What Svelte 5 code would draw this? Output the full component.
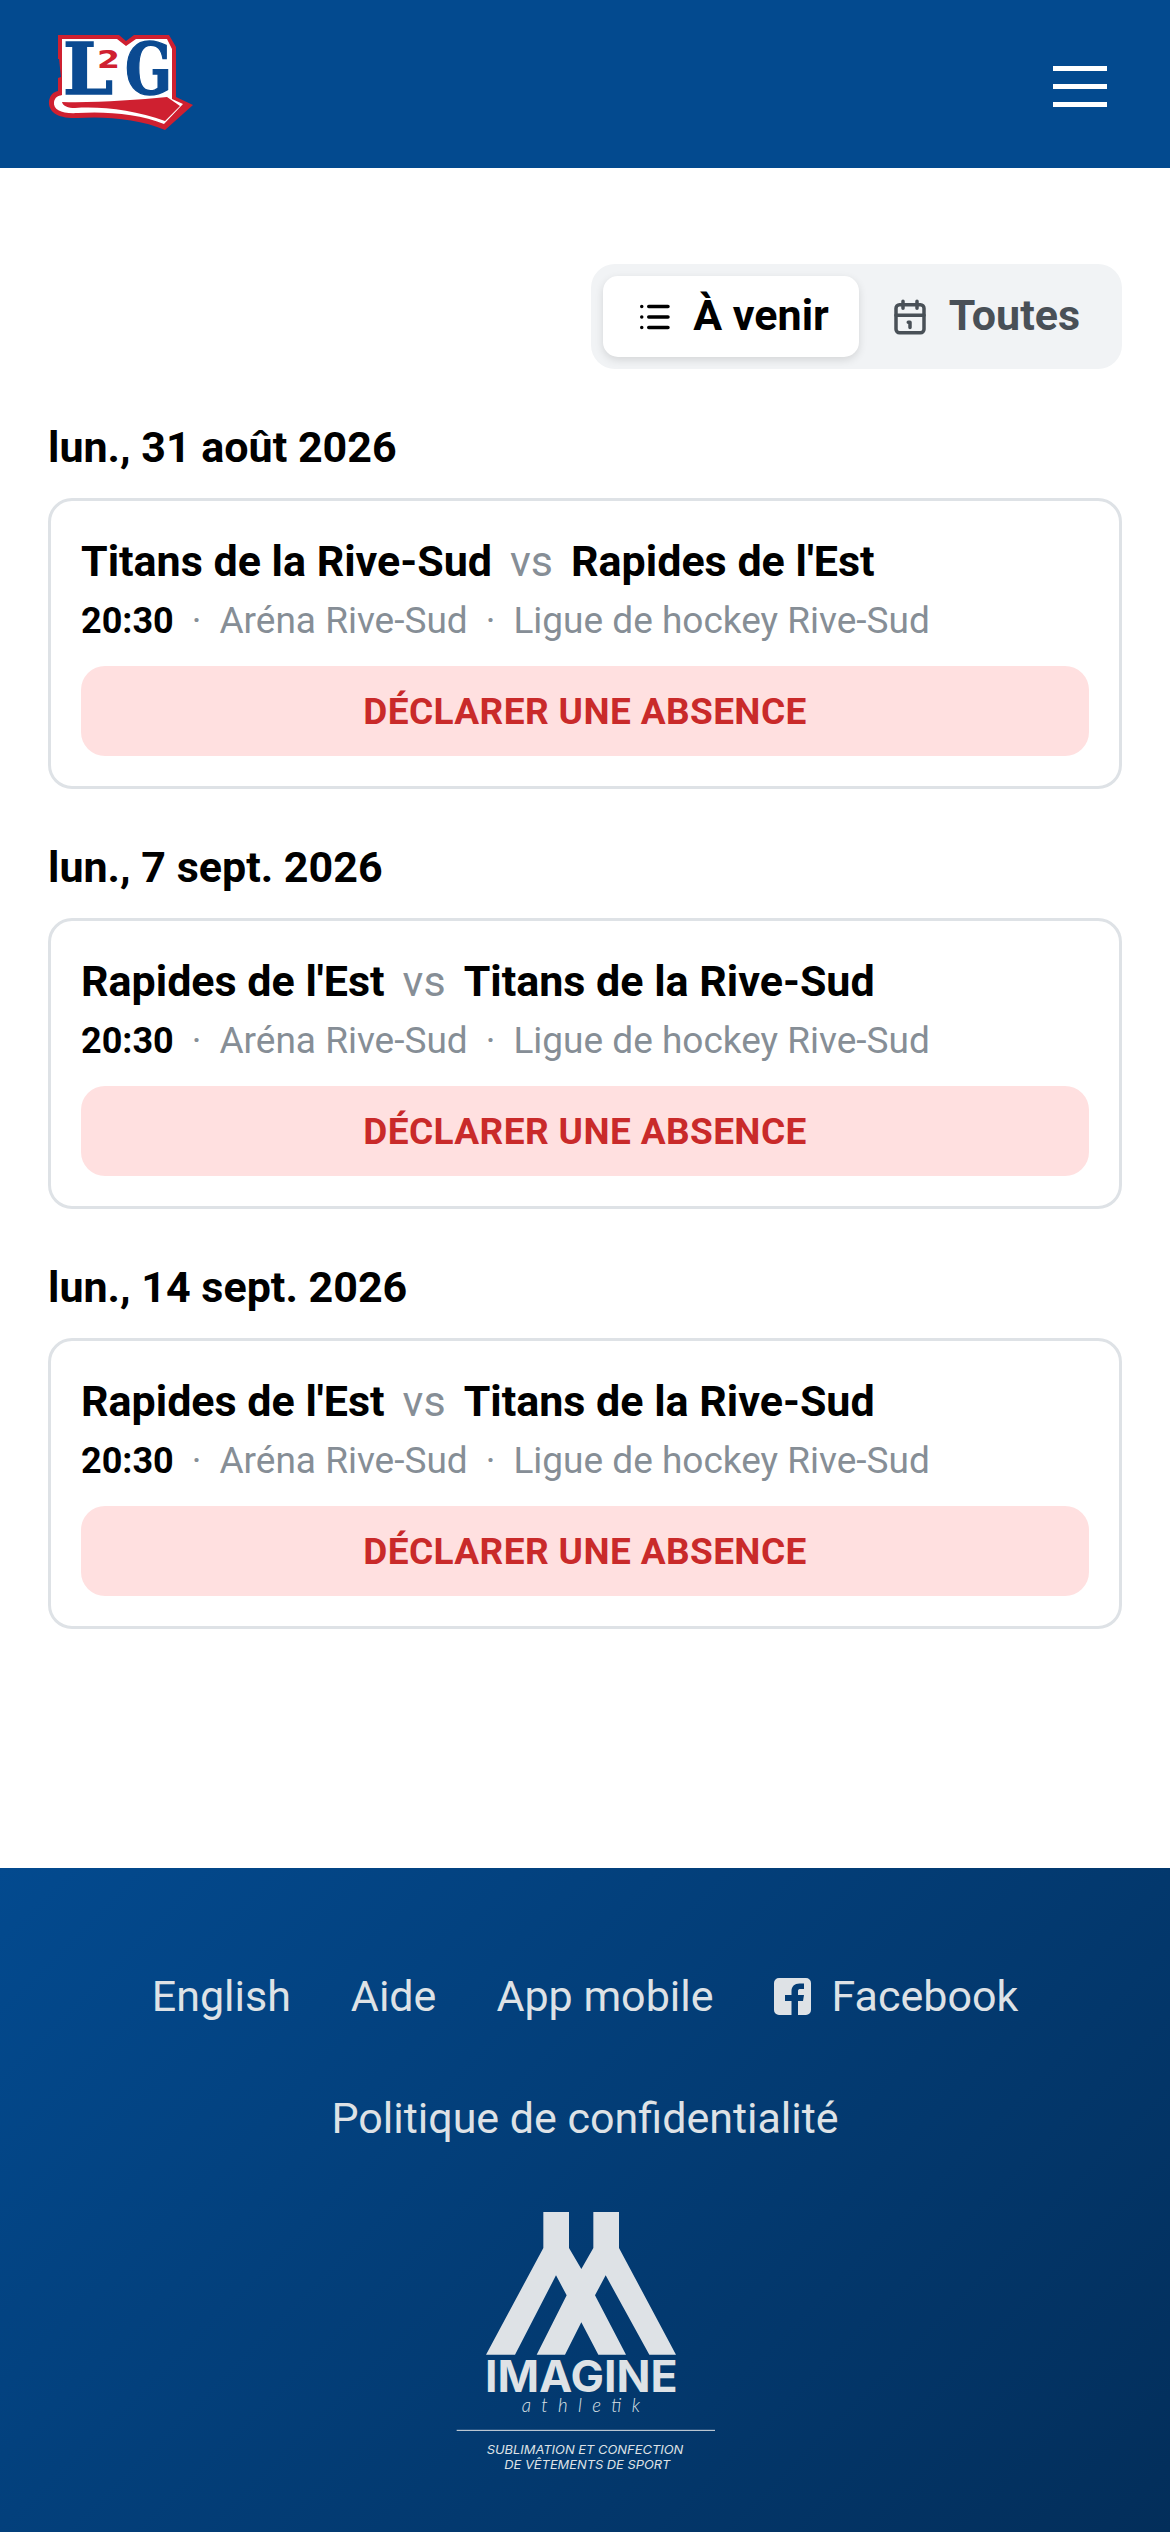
<script>
  const games = [
    { date: 'lun., 31 août 2026', home: 'Titans de la Rive-Sud', away: "Rapides de l'Est" },
    { date: 'lun., 7 sept. 2026', home: "Rapides de l'Est", away: 'Titans de la Rive-Sud' },
    { date: 'lun., 14 sept. 2026', home: "Rapides de l'Est", away: 'Titans de la Rive-Sud' }
  ];
</script>

<div class="page">
  <header class="top">
    <svg class="logo" viewBox="48 34 146 98" width="146" height="98" aria-label="L2G">
      <path d="M58,35 H119 L126,41 L134,35 H169 L176,47 V97 L193,105 L165,130 C140,119 105,116 78,118 C58,119 48,112 49,101 C50,95 53,92 58,91 V78 L61,77 L59,59 H58 Z" fill="#cf2030"/>
      <path d="M62,39 H117 L126,46 L136,39 H167 L172,49 V99 L183,104 L164,124 C140,114 105,111 78,113 C62,114 53,110 54,102 C55,97 58,96 62,95 Z" fill="#fff"/>
      <text x="63" y="94" class="slab" textLength="50" lengthAdjust="spacingAndGlyphs">L</text>
      <text x="125" y="94" class="slab" textLength="47" lengthAdjust="spacingAndGlyphs">G</text>
      <rect x="96" y="49" width="25" height="22" fill="#fff"/>
      <text x="97" y="68" class="two" textLength="23" lengthAdjust="spacingAndGlyphs">2</text>
      <path d="M62,102 C95,103 135,100 167,97 L180,106 L165,121 C135,110 100,106 75,108 C68,108 63,106 62,102 Z" fill="#cf2030"/>
    </svg>
    <button class="burger" aria-label="Menu"><span></span><span></span><span></span></button>
  </header>

  <main class="content">
    <div class="toggle-row">
      <div class="toggle">
        <div class="tab active">
          <svg viewBox="0 0 24 24" width="42" height="42" fill="none" stroke="currentColor" stroke-width="2" stroke-linecap="round" stroke-linejoin="round">
            <path d="M9 6h11M9 12h11M9 18h11M5 6v.01M5 12v.01M5 18v.01"/>
          </svg>
          <span>À venir</span>
        </div>
        <div class="tab">
          <svg viewBox="0 0 24 24" width="42" height="42" fill="none" stroke="currentColor" stroke-width="2" stroke-linecap="round" stroke-linejoin="round">
            <rect x="4" y="5" width="16" height="16" rx="2"/>
            <path d="M16 3v4M8 3v4M4 11h16M11 15h1v3"/>
          </svg>
          <span>Toutes</span>
        </div>
      </div>
    </div>

    {#each games as g}
      <section class="group">
        <h2>{g.date}</h2>
        <article class="card">
          <div class="teams"><b>{g.home}</b><span class="vs">vs</span><b>{g.away}</b></div>
          <div class="meta">
            <b>20:30</b><span class="dot">·</span><span>Aréna Rive-Sud</span><span class="dot">·</span><span>Ligue de hockey Rive-Sud</span>
          </div>
          <button class="absence">DÉCLARER UNE ABSENCE</button>
        </article>
      </section>
    {/each}
  </main>

  <footer class="foot">
    <nav class="links">
      <span>English</span>
      <span>Aide</span>
      <span>App mobile</span>
      <span class="fb">
        <svg viewBox="0 0 37 37" width="37" height="37">
          <path d="M5 0H32A5 5 0 0 1 37 5V32A5 5 0 0 1 32 37H24V23H29L30 17H24V13C24 11.500 25 11 26.500 11H30V5.500H25.500C20.500 5.500 17.500 8.500 17.500 13V17H11V23H17.500V37H5A5 5 0 0 1 0 32V5A5 5 0 0 1 5 0Z" fill="#dee2e6"/>
        </svg>
        Facebook
      </span>
      <span class="wide">Politique de confidentialité</span>
    </nav>
    <svg class="imagine" viewBox="15 0 960 900" width="320" height="300" aria-label="Imagine athletik">
      <path fill="#dee2e6" d="M370 72H447V180L484 243L520 180V72H597V180L768 500H688L557 262L525 322L618 500H535L484 403L435 500H350L440 322L408 262L285 500H198L370 180Z"/>
      <text x="195" y="612" class="im" textLength="578" lengthAdjust="spacingAndGlyphs">IMAGINE</text>
      <text x="305" y="672" class="ath" textLength="355">athletik</text>
      <line x1="110" y1="727" x2="885" y2="727" stroke="#dee2e6" stroke-width="3"/>
      <text x="495" y="798" class="tag" text-anchor="middle" textLength="590" lengthAdjust="spacingAndGlyphs">SUBLIMATION ET CONFECTION</text>
      <text x="502" y="843" class="tag" text-anchor="middle" textLength="498" lengthAdjust="spacingAndGlyphs">DE VÊTEMENTS DE SPORT</text>
    </svg>
  </footer>
</div>

<style>
  :global(body) {
    margin: 0;
    background: #fff;
    font-family: Roboto, "Liberation Sans", sans-serif;
  }
  .page {
    display: flex;
    flex-direction: column;
    min-height: 2532px;
  }
  .top {
    height: 168px;
    box-sizing: border-box;
    background: #034a8f;
    display: flex;
    align-items: center;
    justify-content: space-between;
    padding: 5px 63px 0 48px;
  }
  .logo { display: block; margin-top: -8px; overflow: visible; }
  .slab {
    font-family: "DejaVu Serif", serif;
    font-weight: 700;
    font-size: 71px;
    fill: #0b4a91;
    stroke: #0b4a91;
    stroke-width: 1.5px;
  }
  .two {
    font-family: "DejaVu Sans", sans-serif;
    font-weight: 700;
    font-size: 24px;
    fill: #cf2030;
  }
  .burger {
    width: 54px;
    height: 41px;
    padding: 0;
    border: 0;
    background: none;
    display: flex;
    flex-direction: column;
    justify-content: space-between;
  }
  .burger span {
    display: block;
    height: 5px;
    background: #fff;
  }
  .content {
    flex: 1;
    padding: 96px 48px 0;
  }
  .toggle-row {
    display: flex;
    justify-content: flex-end;
    margin-bottom: 51px;
  }
  .toggle {
    display: flex;
    padding: 12px;
    height: 105px;
    box-sizing: border-box;
    background: #f1f3f5;
    border-radius: 24px;
  }
  .tab {
    display: flex;
    align-items: center;
    gap: 18px;
    height: 81px;
    padding: 0 30px;
    box-sizing: border-box;
    font-size: 43px;
    font-weight: 700;
    color: #495057;
  }
  .tab span { position: relative; top: -2px; }
  .active {
    color: #000;
    background: #fff;
    border-radius: 15px;
    box-shadow: 0 3px 9px rgba(0, 0, 0, 0.12);
  }
  .group { margin-bottom: 51px; }
  h2 {
    margin: 0 0 24px;
    font-size: 43px;
    line-height: 54px;
    font-weight: 700;
    color: #000;
  }
  .card {
    box-sizing: border-box;
    height: 291px;
    border: 3px solid #dee2e6;
    border-radius: 24px;
    padding: 30px;
    background: #fff;
  }
  .teams {
    display: flex;
    gap: 18px;
    align-items: baseline;
    font-size: 43px;
    line-height: 60px;
    color: #000;
  }
  .vs {
    color: #868e96;
    font-weight: 400;
  }
  .meta {
    display: flex;
    gap: 18px;
    align-items: baseline;
    font-size: 37px;
    line-height: 54px;
    color: #868e96;
    margin-top: 3px;
  }
  .meta b { color: #000; font-size: 36px; }
  .absence {
    display: block;
    width: 100%;
    height: 90px;
    margin-top: 18px;
    border: 0;
    border-radius: 24px;
    background: #ffe0e0;
    color: #c92a2a;
    font-family: inherit;
    font-size: 37px;
    font-weight: 700;
    letter-spacing: 0.4px;
  }
  .foot {
    height: 664px;
    box-sizing: border-box;
    background: linear-gradient(135deg, #034a8f 0%, #032e5a 100%);
    color: #dee2e6;
    padding-top: 103px;
    display: flex;
    flex-direction: column;
    align-items: center;
  }
  .links {
    display: flex;
    flex-wrap: wrap;
    justify-content: center;
    column-gap: 60px;
    row-gap: 72px;
    font-size: 43px;
    line-height: 50px;
    width: 100%;
  }
  .wide { flex-basis: 100%; text-align: center; }
  .fb { display: flex; align-items: center; gap: 21px; }
  .imagine { display: block; margin-top: 45px; }
  .im {
    font-family: Inter, sans-serif;
    font-weight: 700;
    font-size: 130px;
    fill: #dee2e6;
  }
  .ath {
    font-family: Lato, sans-serif;
    font-style: italic;
    font-weight: 300;
    font-size: 56px;
    fill: #dee2e6;
  }
  .tag {
    font-family: Inter, sans-serif;
    font-style: italic;
    font-weight: 400;
    font-size: 37px;
    fill: #dee2e6;
  }
</style>
